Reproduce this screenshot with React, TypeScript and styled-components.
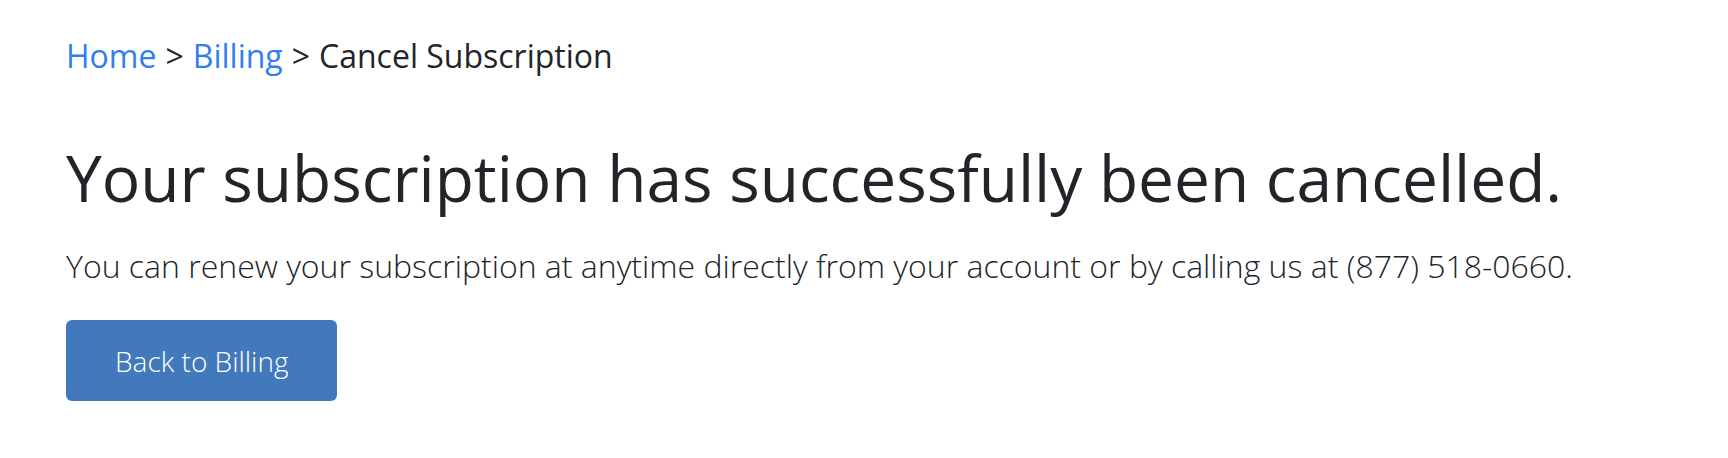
import React from "react";
import styled, { createGlobalStyle } from "styled-components";

const GlobalStyle = createGlobalStyle`
  html, body {
    margin: 0;
    padding: 0;
    background: #ffffff;
  }
  body {
    font-family: "Open Sans", "Noto Sans", "Liberation Sans", sans-serif;
    color: #212529;
  }
  * { box-sizing: border-box; }
`;

const Page = styled.main`
  display: flex;
  flex-direction: column;
  align-items: flex-start;
  padding: 32px 66px 0 66px;
`;

const Breadcrumb = styled.nav`
  display: flex;
  align-items: baseline;
  gap: 9px;
  font-size: 32px;
  line-height: 48px;
  font-weight: 400;
  color: #212529;
`;

const Crumb = styled.a`
  color: #2f80ed;
  text-decoration: none;
`;

const Separator = styled.span`
  color: #212529;
`;

const Current = styled.span`
  color: #212529;
`;

const Title = styled.h1`
  margin: 59px 0 0 0;
  font-size: 64px;
  line-height: 77px;
  font-weight: 400;
  color: #212529;
`;

const Text = styled.p`
  margin: 26px 0 0 0;
  font-size: 32px;
  line-height: 48px;
  font-weight: 300;
  color: #212529;
`;

const Button = styled.button`
  margin-top: 30px;
  padding: 20px 48px 19px 49px;
  font-family: inherit;
  font-size: 28px;
  line-height: 42px;
  font-weight: 300;
  color: #ffffff;
  background: #4279bd;
  border: none;
  border-radius: 6px;
  cursor: pointer;
`;

export default function App() {
  return (
    <>
      <GlobalStyle />
      <Page>
        <Breadcrumb>
          <Crumb href="#">Home</Crumb>
          <Separator>&gt;</Separator>
          <Crumb href="#">Billing</Crumb>
          <Separator>&gt;</Separator>
          <Current>Cancel Subscription</Current>
        </Breadcrumb>
        <Title>Your subscription has successfully been cancelled.</Title>
        <Text>
          You can renew your subscription at anytime directly from your account or by calling us at (877) 518-0660.
        </Text>
        <Button type="button">Back to Billing</Button>
      </Page>
    </>
  );
}
